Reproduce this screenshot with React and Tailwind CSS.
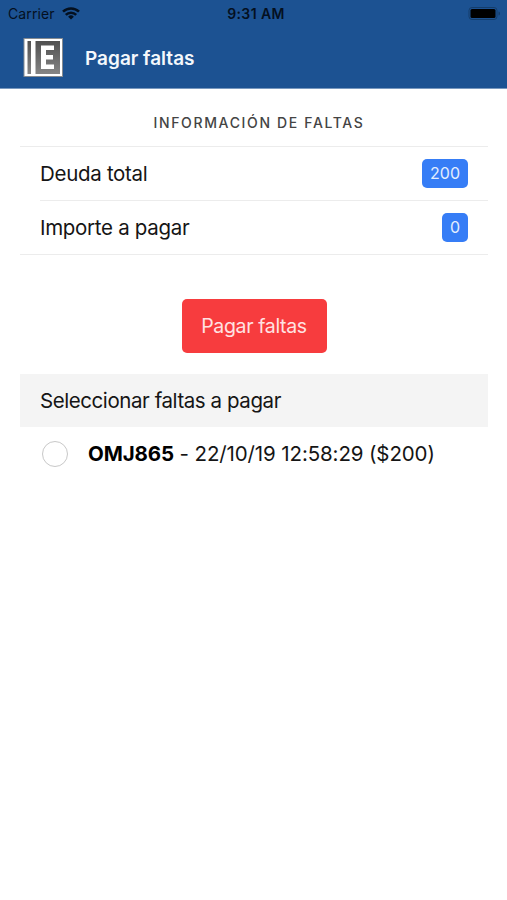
const WifiIcon = () => (
    <svg width="18" height="13" viewBox="0 0 18 13" fill="none" stroke="#04101f" strokeWidth="2.5">
        <path d="M1 4.700a11.300 11.300 0 0 1 16 0" />
        <path d="M3.800 7.900a7.300 7.300 0 0 1 10.400 0" />
        <path d="M9 12.600 6.100 9.700a4.100 4.100 0 0 1 5.800 0z" fill="#04101f" stroke="none" />
    </svg>
);

const BatteryIcon = () => (
    <svg width="33" height="16" viewBox="0 0 33 16">
        <rect x="1" y="1.500" width="28" height="12" rx="3" fill="none" stroke="#143d6b" />
        <rect x="2.500" y="3" width="25" height="9" rx="1.500" fill="#000" />
        <path d="M30.500 5.500v4c1-.3 1.500-1 1.500-2s-.5-1.700-1.500-2z" fill="#143d6b" />
    </svg>
);

const Logo = () => (
    <svg width="40" height="40" viewBox="0 0 40 40">
        <defs>
            <linearGradient id="plate" x1="0" y1="0" x2="0" y2="1">
                <stop offset="0" stopColor="#505050" />
                <stop offset="1" stopColor="#858585" />
            </linearGradient>
        </defs>
        <rect x="1" y=".5" width="38.500" height="38" fill="#fff" stroke="#858b91" />
        <rect x="4.500" y="3" width="3.500" height="33" fill="url(#plate)" />
        <rect x="12.500" y="3" width="24.500" height="33" fill="url(#plate)" />
        <path d="M18 7.500h13v4.500h-8v5h7v4.500h-7v5h8V31H18z" fill="#fff" />
    </svg>
);

const StatusBar = () => (
    <div className="grid h-[27px] grid-cols-3 items-center pl-[8px] pr-[6px] text-[14px] text-[#04101f]">
        <div className="flex items-center gap-[7px]">
            <span className="tracking-[0.1px]">Carrier</span>
            <WifiIcon />
        </div>
        <span className="pl-[3px] text-center text-[14px] font-semibold tracking-[0.4px]">9:31 AM</span>
        <div className="flex justify-end">
            <BatteryIcon />
        </div>
    </div>
);

const Badge = ({ children }) => (
    <span className="flex h-[29px] items-center rounded-[5px] bg-[#367df6] px-[8px] pb-px text-[16px] text-[#e4eefe]">
        {children}
    </span>
);

const totals = [
    { label: "Deuda total", value: 200 },
    { label: "Importe a pagar", value: 0 },
];

export default function App() {
    return (
        <div className="h-[900px] w-[507px] bg-white font-['Inter',sans-serif] text-[#151515]">
            <header className="h-[89px] border-b border-[#7898be] bg-[#1c5292]">
                <StatusBar />
                <div className="flex h-[61px] items-center pl-[23px]">
                    <Logo />
                    <h1 className="mt-[3px] ml-[22px] text-[19px] font-semibold text-[#f4f8fc]">Pagar faltas</h1>
                </div>
            </header>

            <main className="pr-[19px] pl-5">
                <h2 className="flex h-[58px] items-center justify-center border-b border-[#ececec] pt-[9px] pl-[10px] text-[14px] font-medium tracking-[1.650px] text-[#444]">
                    INFORMACIÓN DE FALTAS
                </h2>
                <ul className="border-b border-[#ececec] pl-5">
                    {totals.map(({ label, value }) => (
                        <li key={label} className="flex h-[54px] items-center justify-between border-b border-[#ececec] pr-5 last:h-[53px] last:border-b-0">
                            <span className="pt-[2px] text-[20.500px] tracking-[-0.300px]">{label}</span>
                            <Badge>{value}</Badge>
                        </li>
                    ))}
                </ul>

                <div className="flex justify-center pt-[44px] pb-[21px]">
                    <button className="h-[54px] w-[145px] rounded-[5px] bg-[#f73c3e] pt-[2px] text-[19.500px] tracking-[-0.350px] text-[#ffe2e2]">
                        Pagar faltas
                    </button>
                </div>

                <div className="flex h-[53px] items-center bg-[#f4f4f4] pt-[2px] pl-5 text-[20.500px] tracking-[-0.430px]">
                    Seleccionar faltas a pagar
                </div>
                <label className="flex h-[54px] items-center pl-[22px] text-[20.500px] tracking-[-0.120px]">
                    <span className="mr-[20px] h-[26px] w-[26px] rounded-full border border-[#c8c8c8]" />
                    <span>
                        <b className="font-bold text-black">OMJ865</b> - 22/10/19 12:58:29 ($200)
                    </span>
                </label>
            </main>
        </div>
    );
}
